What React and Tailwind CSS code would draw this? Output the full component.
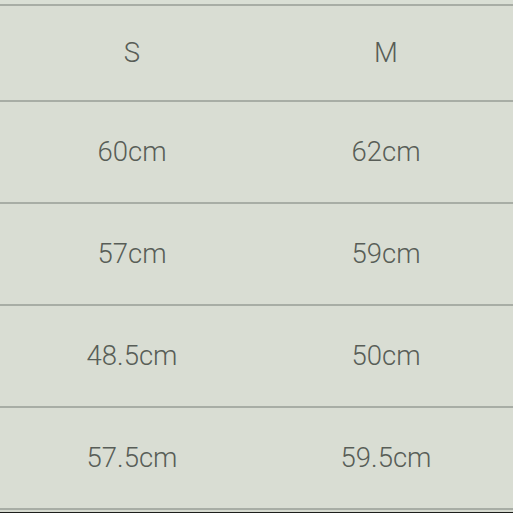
export default function App() {
  const rows = [
    ["S", "M"],
    ["60cm", "62cm"],
    ["57cm", "59cm"],
    ["48.5cm", "50cm"],
    ["57.5cm", "59.5cm"],
  ];
  return (
    <div
      className="w-[513px] h-[513px] bg-[#d9ddd3] flex flex-col overflow-hidden text-[#585d57]"
      style={{ fontFamily: 'Roboto, "Liberation Sans", Arial, sans-serif' }}
    >
      <div className="h-[4px] bg-[#dadfd5]" />
      <div className="h-[2px] bg-[#a8ada5]" />
      {rows.map((r, i) => (
        <div key={i} className="flex flex-col">
          <div className={`flex ${i === 0 ? "h-[94px]" : "h-[100px]"} items-center`}>
            <div className="w-[264px] text-center text-[27.5px] font-light leading-none">{r[0]}</div>
            <div className="w-[244px] text-center text-[27.5px] font-light leading-none">{r[1]}</div>
          </div>
          <div className="h-[2px] bg-[#a8ada5]" />
        </div>
      ))}
      <div className="h-[2px] bg-[#d6dad0]" />
      <div className="flex-1 bg-[#1d1f1c]" />
    </div>
  );
}
